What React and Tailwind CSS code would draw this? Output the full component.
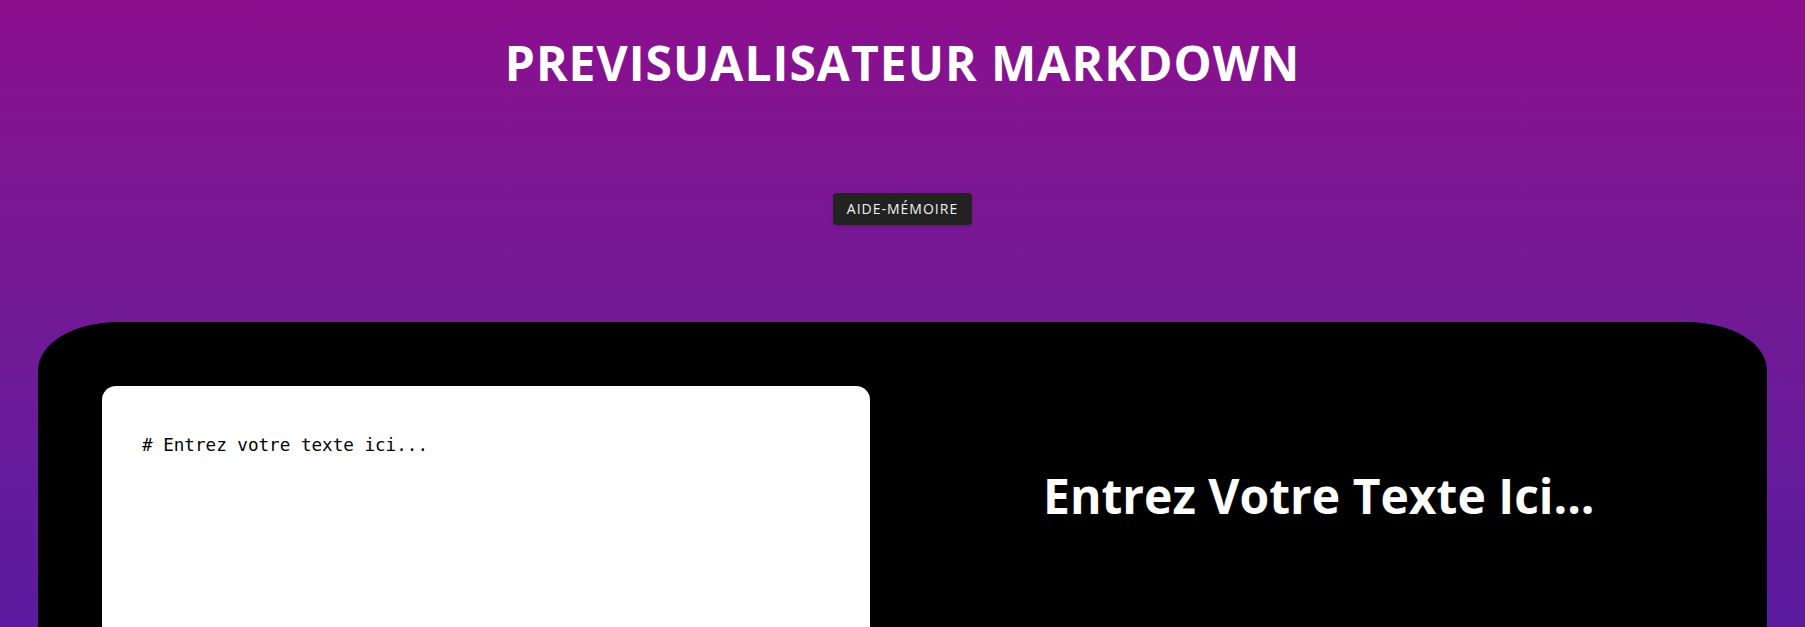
import React, { useState } from 'react';

const App = () => {
  const [text, setText] = useState('# Entrez votre texte ici...');

  return (
    <div className="h-screen overflow-hidden bg-gradient-to-b from-[#8b0e8d] to-[#5a1a9f] font-['Open_Sans',sans-serif]">
      {/* Header */}
      <header className="flex flex-col items-center pt-[34px]">
        <h1 className="text-[48px] font-bold leading-[1.2] tracking-[1px] text-white">PREVISUALISATEUR MARKDOWN</h1>
        <button className="mt-[101px] h-8 rounded bg-[#222222] px-[14px] text-[14px] tracking-[1px] text-[#f2f2f2] shadow-md">
          AIDE-MÉMOIRE
        </button>
      </header>

      {/* Editor + preview */}
      <main className="mx-[38px] mt-[97px] flex justify-between rounded-[80px/48px] bg-black p-16 pb-24">
        <textarea
          value={text}
          onChange={(e) => setText(e.target.value)}
          className="h-[420px] w-[48%] resize-none rounded-[14px] bg-white px-10 pt-[48px] font-['DejaVu_Sans_Mono',monospace] text-[17.6px] leading-[1.3] text-black outline-none"
        />
        <div className="w-[48%] pt-[74px] text-center">
          <h1 className="text-[48px] font-bold text-white">Entrez Votre Texte Ici...</h1>
        </div>
      </main>
    </div>
  );
};

export default App;
